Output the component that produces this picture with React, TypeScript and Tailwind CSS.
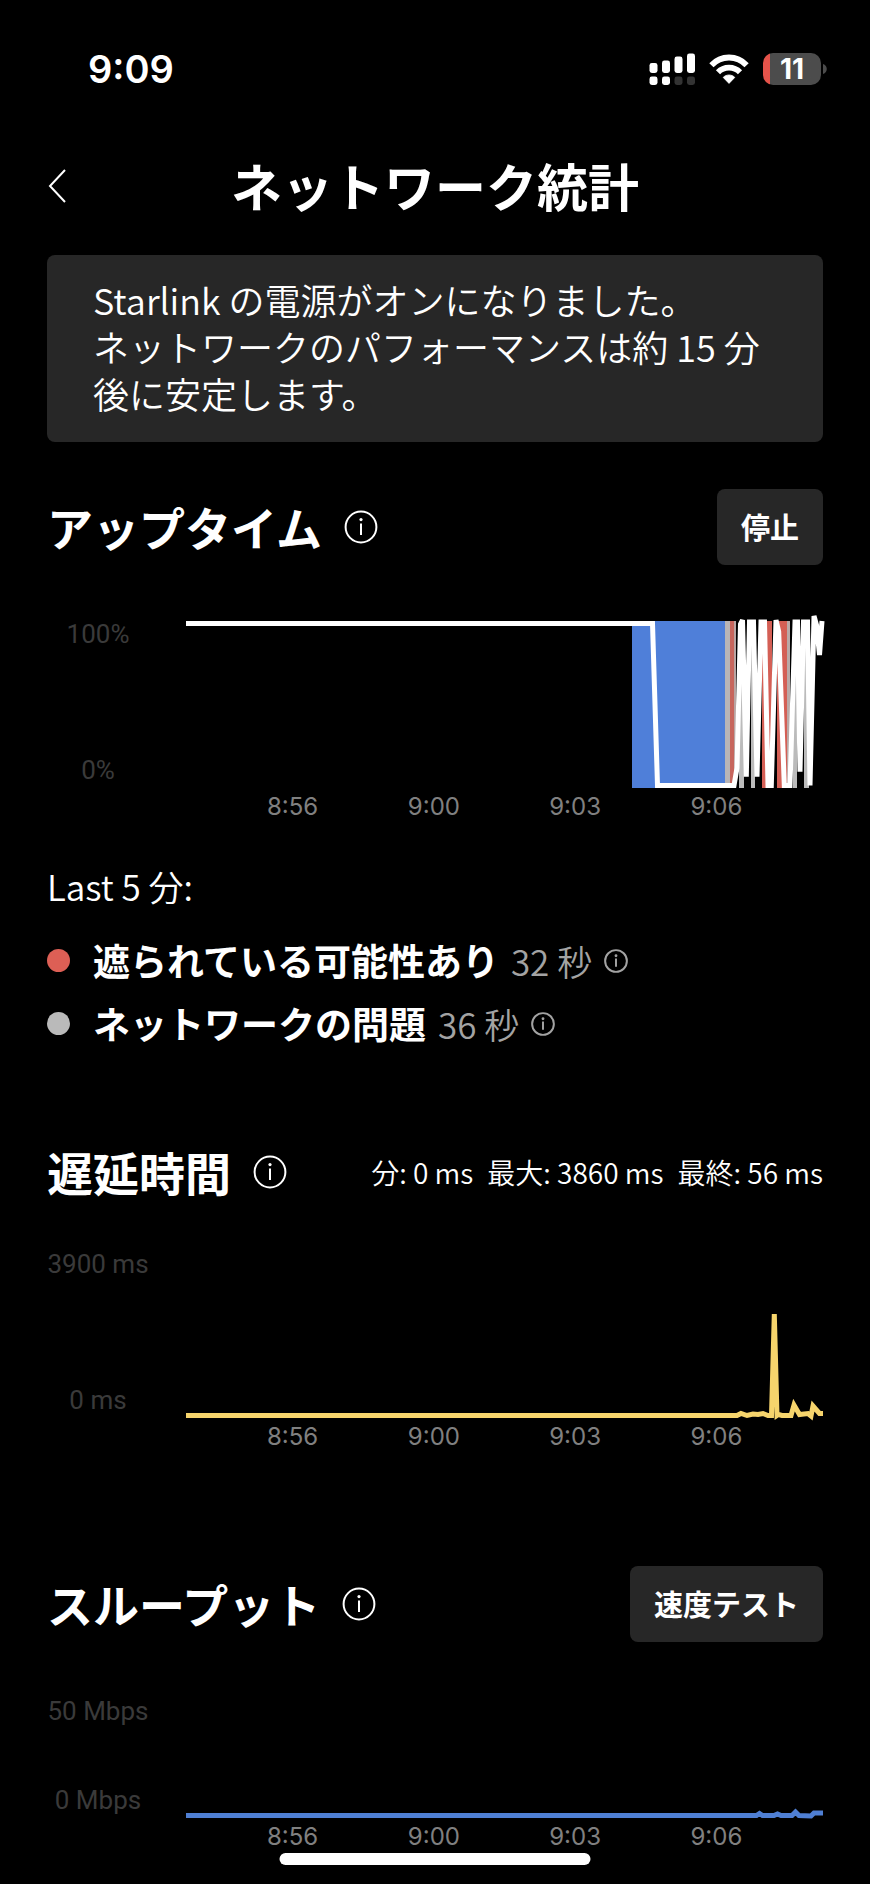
import type { ReactNode } from "react";

const TICKS = ["8:56", "9:00", "9:03", "9:06"];

type Band = { x: number; width: number; color: string };

const OUTAGES: Band[] = [
  { x: 446, width: 93, color: "#4f7fd9" },
  { x: 539, width: 5, color: "#b9b5b6" },
  { x: 544, width: 4, color: "#c7665d" },
  { x: 548, width: 2, color: "#b9a5a3" },
  { x: 553, width: 5, color: "#bbbbbb" },
  { x: 565, width: 4, color: "#bbbbbb" },
  { x: 576, width: 10, color: "#d45f55" },
  { x: 591, width: 10, color: "#d45f55" },
  { x: 601, width: 3, color: "#b9a9a7" },
  { x: 607, width: 4, color: "#bbbbbb" },
  { x: 618, width: 5, color: "#bbbbbb" },
];

const UPTIME_LINE =
  "0,2.5 466.5,2.5 471.5,164.5 548,164.5 551,147 554.5,3 556.5,-1 560.3,155.7 563.5,1 567.5,1 571,155.7 575,1 578.5,1 582,164.5 585.3,164.5 590,-1 592.7,10.7 598.3,164.5 604,164.5 609,1 611.5,1 614,150.7 617.5,1 621.5,1 624,164.5 628,-5 630.5,4 633.5,34 636,0";

const LATENCY_LINE =
  "0,164.5 551,164.5 555,162.5 561,164.5 567,163 572,163.5 577,162.5 582,164.5 585.5,164.5 588.3,63 591,164.5 592.5,163.5 596,164.5 605,164.5 608,154 613.5,163.5 622,162.5 625,165 627,155 633.5,162.5 637,162.5";

const THROUGHPUT_LINE =
  "0,117.5 570.5,117.5 573.5,115.5 576.5,117.5 588,117.5 591.5,116 595,117.5 606,117.5 609.5,114 613,117.5 625,118 628,115 637,115";

function InfoButton({ label, small }: { label: string; small?: boolean }) {
  const stroke = small ? 2.8 : 2;
  return (
    <button type="button" aria-label={label} className="shrink-0">
      <svg
        viewBox="0 0 34 34"
        fill="none"
        stroke="currentColor"
        strokeWidth={stroke}
        className={small ? "size-6" : "size-[34px]"}
        aria-hidden="true"
      >
        <circle cx="17" cy="17" r="15.4" />
        <circle cx="17" cy="9.6" r={small ? 2 : 1.6} fill="currentColor" stroke="none" />
        <path d="M17 13.6V25" />
      </svg>
    </button>
  );
}

function ActionButton({ children }: { children: ReactNode }) {
  return (
    <button
      type="button"
      className="h-[76px] shrink-0 rounded-lg bg-[#272727] px-6 text-[29px] font-bold"
    >
      {children}
    </button>
  );
}

function SectionHeader({ title, children }: { title: string; children: ReactNode }) {
  return (
    <header className="flex items-center justify-between">
      <div className="flex items-center gap-[22px]">
        <h2 className="pb-0.5 text-[46px] leading-[44px] font-bold">{title}</h2>
        <InfoButton label={`${title}の詳細`} />
      </div>
      {children}
    </header>
  );
}

type ChartProps = {
  label: string;
  max: string;
  min: string;
  height: number;
  points: string;
  color: string;
  bands?: Band[];
};

function Chart({ label, max, min, height, points, color, bands = [] }: ChartProps) {
  return (
    <div className="mt-14 flex gap-[37px]">
      <div className="mb-[33px] flex w-[102px] shrink-0 flex-col justify-between pb-[5px] text-center font-[Roboto] text-[26px] leading-[26px] whitespace-nowrap text-[#3a3a3a]">
        <span>{max}</span>
        <span>{min}</span>
      </div>
      <div className="min-w-0 flex-1">
        <svg
          role="img"
          aria-label={label}
          viewBox={`0 0 637 ${height}`}
          preserveAspectRatio="none"
          className="block w-full overflow-visible"
          style={{ height }}
        >
          {bands.map((band) => (
            <rect key={band.x} x={band.x} width={band.width} height={height} fill={band.color} />
          ))}
          <polyline points={points} fill="none" stroke={color} strokeWidth="5" />
        </svg>
        <div className="mt-[5px] grid grid-cols-4 px-9 text-center font-[Inter] text-2xl leading-7 text-[#808080]">
          {TICKS.map((tick) => (
            <span key={tick}>{tick}</span>
          ))}
        </div>
      </div>
    </div>
  );
}

function StatusBar() {
  return (
    <div className="flex h-[138px] items-center justify-between pr-[43px] pl-[88px] font-[Inter]">
      <span className="text-[38px] font-semibold">9:09</span>
      <div className="flex items-center gap-3.5">
        <svg viewBox="0 0 46 32" className="h-8 w-[46px]" fill="#fff" aria-hidden="true">
          <rect x="0.5" y="10" width="8" height="10" rx="2.4" />
          <rect x="13" y="7.5" width="8" height="12.5" rx="2.4" />
          <rect x="25.5" y="3.5" width="8" height="16.5" rx="2.4" />
          <rect x="38" y="0.5" width="8" height="19.5" rx="2.4" />
          <rect x="0.5" y="23.5" width="8" height="8.5" rx="2.4" />
          <rect x="13" y="23.5" width="8" height="8.5" rx="2.4" />
          <rect x="25.5" y="23.5" width="8" height="8.5" rx="2.4" fill="#333" />
          <rect x="38" y="23.5" width="8" height="8.5" rx="2.4" fill="#333" />
        </svg>
        <svg viewBox="0 0 40 30" className="h-[30px] w-10" aria-hidden="true">
          <g fill="none" stroke="#fff" strokeWidth="5.8">
            <path d="M2.4 11.2C12 0.9 28 0.9 37.6 11.2" />
            <path d="M9 18.2C15 12 25 12 31 18.2" />
          </g>
          <path
            d="M20 29.4 14.2 23.4C17.4 20.2 22.6 20.2 25.8 23.4Z"
            fill="#fff"
            stroke="#fff"
            strokeWidth="0.8"
            strokeLinejoin="round"
          />
        </svg>
        <div className="flex items-center gap-0.5">
          <span className="flex h-8 w-[58px] items-center justify-center rounded-[10px] bg-[#4c4c4c] bg-linear-to-r from-[#e5534a] from-[7px] to-[#4c4c4c] to-[7px] text-[28px] leading-8 font-bold">
            11
          </span>
          <svg viewBox="0 0 4 10" className="h-2.5 w-1" aria-hidden="true">
            <path d="M0 0C5 1.4 5 8.6 0 10Z" fill="#4c4c4c" />
          </svg>
        </div>
      </div>
    </div>
  );
}

function OutageRow({ dot, name, seconds }: { dot: string; name: string; seconds: string }) {
  return (
    <li className="flex items-center leading-[47px]">
      <span className={`mr-[23px] size-[23px] rounded-full ${dot}`} />
      <span className="text-[37px] font-bold">{name}</span>
      <span className="ml-3 flex items-center gap-3 text-[#a3a3a3]">
        <span className="text-[35px] font-[350]">{seconds}</span>
        <InfoButton label={`${name}の詳細`} small />
      </span>
    </li>
  );
}

const NOTICE =
  "Starlink の電源がオンになりました。\nネットワークのパフォーマンスは約 15 分後に安定します。";

export default function App() {
  return (
    <div
      lang="ja"
      className="min-h-screen bg-black pb-[34px] font-['Noto_Sans_CJK_JP',sans-serif] text-white"
    >
      <StatusBar />

      <header className="relative flex items-center justify-center py-[18px]">
        <a href="#back" aria-label="戻る" className="absolute left-12">
          <svg viewBox="0 0 18 34" className="h-[34px] w-[18px]" fill="none" aria-hidden="true">
            <path d="M17 1 2 17 17 33" stroke="#fff" strokeWidth="2" />
          </svg>
        </a>
        <h1 className="pb-0.5 text-[51px] leading-[58px] font-bold">ネットワーク統計</h1>
      </header>

      <main className="mt-[21px] px-[47px]">
        <p className="rounded-lg bg-[#272727] px-[46px] pt-[21px] pb-[25px] text-[36px] leading-[47px] font-[350] whitespace-pre-line">
          {NOTICE}
        </p>

        <section className="mt-[47px]">
          <SectionHeader title="アップタイム">
            <ActionButton>停止</ActionButton>
          </SectionHeader>
          <Chart
            label="アップタイム"
            max="100%"
            min="0%"
            height={167}
            points={UPTIME_LINE}
            color="#ffffff"
            bands={OUTAGES}
          />
          <h3 className="mt-[41px] text-[35px] leading-[47px] font-[350]">Last 5 分:</h3>
          <ul className="mt-7 flex flex-col gap-4">
            <OutageRow dot="bg-[#dd5f55]" name="遮られている可能性あり" seconds="32 秒" />
            <OutageRow dot="bg-[#bababa]" name="ネットワークの問題" seconds="36 秒" />
          </ul>
        </section>

        <section className="mt-[102px]">
          <SectionHeader title="遅延時間">
            <div className="flex gap-3.5 text-[28px] leading-[42px] font-[350]">
              <span>分: 0 ms</span>
              <span>最大: 3860 ms</span>
              <span>最終: 56 ms</span>
            </div>
          </SectionHeader>
          <Chart
            label="遅延時間"
            max="3900 ms"
            min="0 ms"
            height={167}
            points={LATENCY_LINE}
            color="#f6d46c"
          />
        </section>

        <section className="mt-[115px]">
          <SectionHeader title="スループット">
            <ActionButton>速度テスト</ActionButton>
          </SectionHeader>
          <Chart
            label="スループット"
            max="50 Mbps"
            min="0 Mbps"
            height={120}
            points={THROUGHPUT_LINE}
            color="#4f7fd3"
          />
        </section>
      </main>

      <div className="fixed bottom-[19px] left-1/2 h-3 w-[311px] -translate-x-1/2 rounded-full bg-white" />
    </div>
  );
}
